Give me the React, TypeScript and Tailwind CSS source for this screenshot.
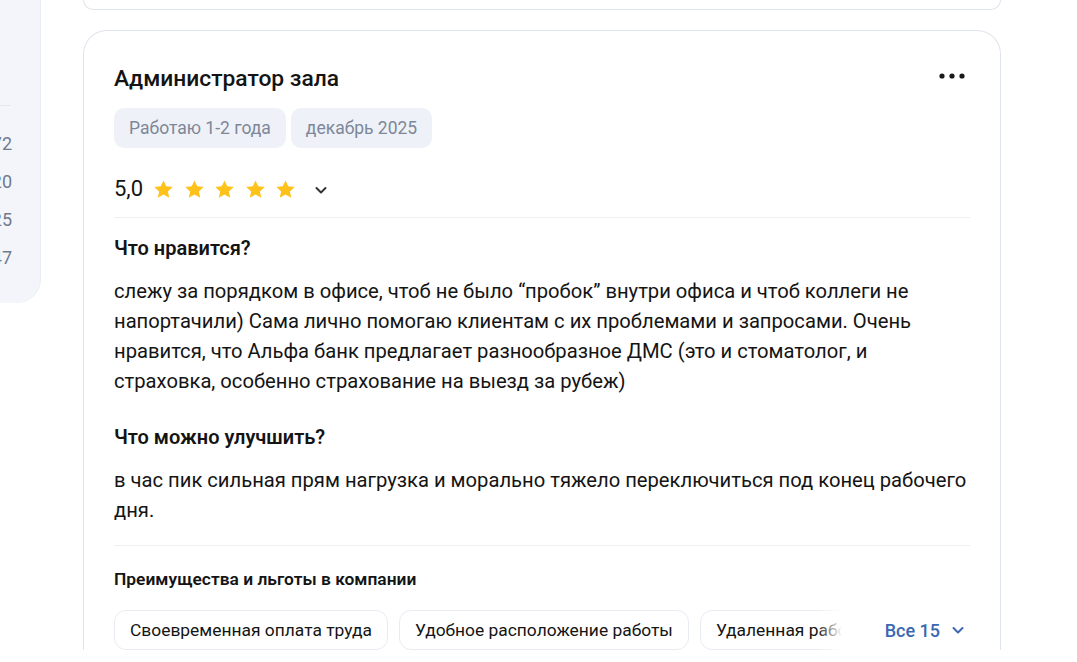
import React from "react"

const Star = () => (
  <svg width="23" height="23" viewBox="0 0 24 24" className="shrink-0">
    <path
      d="M12 2.5l2.85 6.2 6.75.75-5.03 4.57 1.42 6.66L12 17.3l-5.99 3.38 1.42-6.66L2.4 9.45l6.75-.75L12 2.5z"
      fill="#ffc21a"
    />
  </svg>
)

const Chevron = ({ color = "#333", size = 16 }: { color?: string; size?: number }) => (
  <svg width={size} height={size} viewBox="0 0 16 16" fill="none">
    <path d="M3.5 6l4.5 4.5L12.5 6" stroke={color} strokeWidth="2" strokeLinecap="round" strokeLinejoin="round" />
  </svg>
)

export default function App() {
  const sideNums = ["72", "20", "25", "47"]
  const perks = ["Своевременная оплата труда", "Удобное расположение работы", "Удаленная работа"]

  return (
    <div className="flex h-[662px] w-[1077px] overflow-hidden bg-white font-['Roboto',sans-serif] text-[#141414]">
      {/* Side panel (cut off) */}
      <div className="w-[41px] shrink-0 self-start overflow-hidden">
        <div className="flex h-[303px] flex-col rounded-br-[24px] border-r border-[#e9edf4] bg-[#f3f5fa]">
          <div className="mr-[29px] h-[106px] border-b border-[#e3e7ee]" />
          <div className="flex flex-col pt-[18px]">
            {sideNums.map((n) => (
              <div key={n} className="flex h-[38px] items-center justify-end pr-[28px] text-[18px] text-[#6f7b8c]">
                {n}
              </div>
            ))}
          </div>
        </div>
      </div>

      <div className="ml-[42px] flex w-[918px] shrink-0 flex-col gap-[20px]">
        {/* previous card bottom */}
        <div className="h-[10px] rounded-b-[24px] border border-t-0 border-[#dfe4ec]" />

        {/* review card */}
        <div className="rounded-t-[24px] border border-b-0 border-[#dfe4ec] px-[30px] pt-[33px]">
          <div className="flex items-start justify-between">
            <h2 className="text-[22.8px] font-medium leading-[30px]">Администратор зала</h2>
            <button className="mr-[5px] flex h-[24px] w-[26px] items-center justify-center">
              <svg width="26" height="6" viewBox="0 0 26 6">
                <circle cx="3" cy="3" r="2.6" fill="#1a1a1a" />
                <circle cx="13" cy="3" r="2.6" fill="#1a1a1a" />
                <circle cx="23" cy="3" r="2.6" fill="#1a1a1a" />
              </svg>
            </button>
          </div>

          <div className="mt-[14px] flex gap-[5px]">
            <span className="flex h-[40px] items-center rounded-[10px] bg-[#eef1f7] px-[15px] text-[17.5px] text-[#7d8799]">
              Работаю 1-2 года
            </span>
            <span className="flex h-[40px] items-center rounded-[10px] bg-[#eef1f7] px-[15px] text-[17.5px] text-[#7d8799]">
              декабрь 2025
            </span>
          </div>

          <div className="mt-[26px] flex items-center pb-[13px]">
            <span className="text-[22px] leading-[30px]">5,0</span>
            <div className="ml-[9px] flex gap-[7.5px]">
              <Star />
              <Star />
              <Star />
              <Star />
              <Star />
            </div>
            <span className="ml-[16px] mt-[2px]">
              <Chevron />
            </span>
          </div>

          <div className="border-t border-[#eef0f4]" />

          <div className="pt-[17px]">
            <h3 className="text-[20px] font-semibold leading-[26px]">Что нравится?</h3>
            <p className="mt-[15px] text-[20.2px] leading-[30px]">
              слежу за порядком в офисе, чтоб не было “пробок” внутри офиса и чтоб коллеги не напортачили) Сама лично
              помогаю клиентам с их проблемами и запросами. Очень нравится, что Альфа банк предлагает разнообразное ДМС
              (это и стоматолог, и страховка, особенно страхование на выезд за рубеж)
            </p>

            <h3 className="mt-[28px] text-[20px] font-semibold leading-[26px]">Что можно улучшить?</h3>
            <p className="mt-[15px] text-[20.2px] leading-[30px]">
              в час пик сильная прям нагрузка и морально тяжело переключиться под конец рабочего дня.
            </p>
          </div>

          <div className="mt-[20px] border-t border-[#eef0f4]" />

          <h4 className="mt-[22px] text-[17.4px] font-semibold leading-[22px]">Преимущества и льготы в компании</h4>

          <div className="mt-[20px] flex items-center">
            <div className="relative flex min-w-0 flex-1 gap-[11px] overflow-hidden pr-[20px]">
              {perks.map((p) => (
                <span
                  key={p}
                  className="flex h-[40px] shrink-0 items-center rounded-[12px] border border-[#e8ecf2] px-[15px] text-[17.4px]"
                >
                  {p}
                </span>
              ))}
              <div className="absolute right-0 top-0 h-full w-[50px] bg-gradient-to-r from-white/0 via-white to-white" />
            </div>
            <button className="ml-[18px] flex items-center gap-[10px] pr-[4px] text-[18px] font-medium text-[#3b68b1]">
              Все 15
              <Chevron color="#3b68b1" />
            </button>
          </div>
        </div>
      </div>
    </div>
  )
}
